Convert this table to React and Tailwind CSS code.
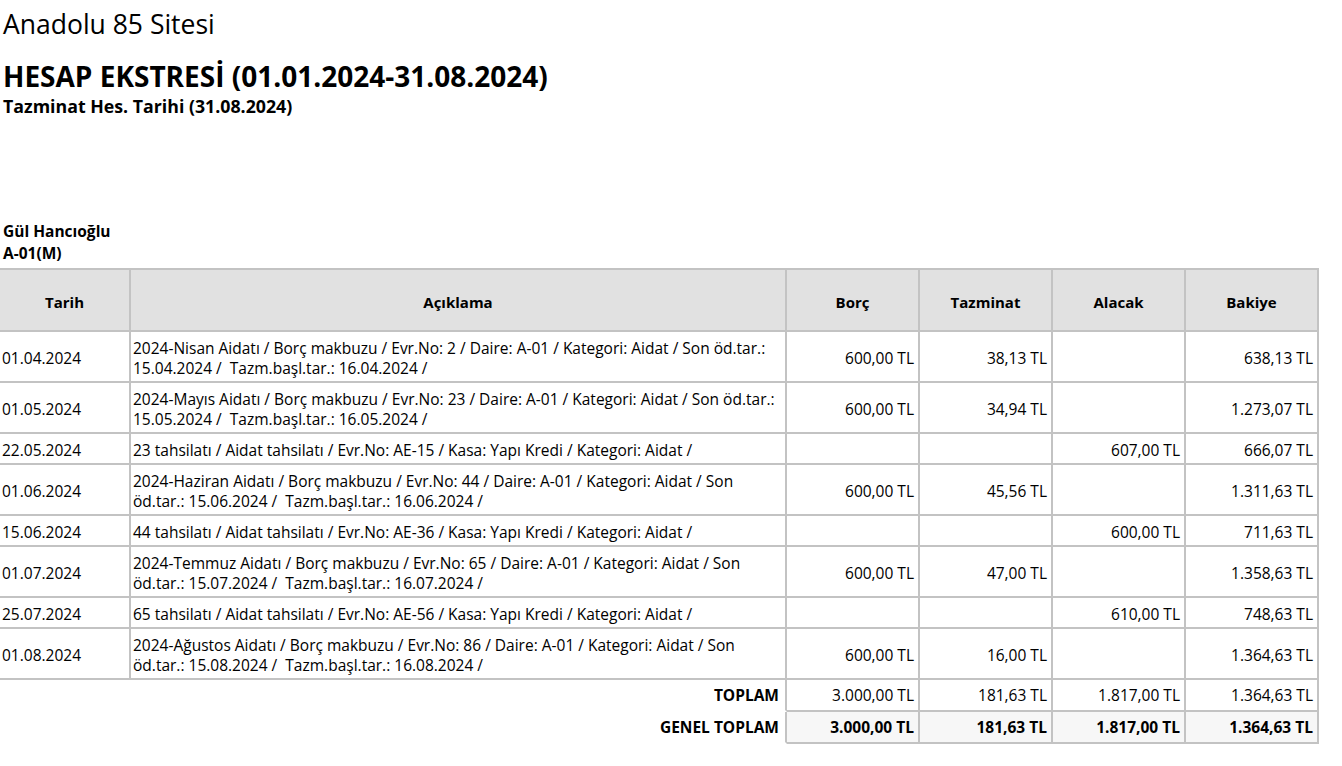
import React from "react";

const rows = [
  ["01.04.2024", "2024-Nisan Aidatı / Borç makbuzu / Evr.No: 2 / Daire: A-01 / Kategori: Aidat / Son öd.tar.: 15.04.2024 /\u00a0 Tazm.başl.tar.: 16.04.2024 /", "600,00 TL", "38,13 TL", "", "638,13 TL"],
  ["01.05.2024", "2024-Mayıs Aidatı / Borç makbuzu / Evr.No: 23 / Daire: A-01 / Kategori: Aidat / Son öd.tar.: 15.05.2024 /\u00a0 Tazm.başl.tar.: 16.05.2024 /", "600,00 TL", "34,94 TL", "", "1.273,07 TL"],
  ["22.05.2024", "23 tahsilatı / Aidat tahsilatı / Evr.No: AE-15 / Kasa: Yapı Kredi / Kategori: Aidat /", "", "", "607,00 TL", "666,07 TL"],
  ["01.06.2024", "2024-Haziran Aidatı / Borç makbuzu / Evr.No: 44 / Daire: A-01 / Kategori: Aidat / Son öd.tar.: 15.06.2024 /\u00a0 Tazm.başl.tar.: 16.06.2024 /", "600,00 TL", "45,56 TL", "", "1.311,63 TL"],
  ["15.06.2024", "44 tahsilatı / Aidat tahsilatı / Evr.No: AE-36 / Kasa: Yapı Kredi / Kategori: Aidat /", "", "", "600,00 TL", "711,63 TL"],
  ["01.07.2024", "2024-Temmuz Aidatı / Borç makbuzu / Evr.No: 65 / Daire: A-01 / Kategori: Aidat / Son öd.tar.: 15.07.2024 /\u00a0 Tazm.başl.tar.: 16.07.2024 /", "600,00 TL", "47,00 TL", "", "1.358,63 TL"],
  ["25.07.2024", "65 tahsilatı / Aidat tahsilatı / Evr.No: AE-56 / Kasa: Yapı Kredi / Kategori: Aidat /", "", "", "610,00 TL", "748,63 TL"],
  ["01.08.2024", "2024-Ağustos Aidatı / Borç makbuzu / Evr.No: 86 / Daire: A-01 / Kategori: Aidat / Son öd.tar.: 15.08.2024 /\u00a0 Tazm.başl.tar.: 16.08.2024 /", "600,00 TL", "16,00 TL", "", "1.364,63 TL"],
];

const totals = ["3.000,00 TL", "181,63 TL", "1.817,00 TL", "1.364,63 TL"];

export default function App() {
  return (
    <div className="font-['Open_Sans',sans-serif] text-black bg-white min-h-[766px]">
      <div className="pl-[3px] pt-[6px] text-[26.5px] leading-[36px]">Anadolu 85 Sitesi</div>
      <div className="pl-[3px] mt-[16px] text-[28px] leading-[36px] font-bold">HESAP EKSTRESİ (01.01.2024-31.08.2024)</div>
      <div className="pl-[3px] mt-[2px] text-[17.75px] leading-[20px] font-bold">Tazminat Hes. Tarihi (31.08.2024)</div>
      <div className="pl-[3px] mt-[104px] text-[15.5px] leading-[22px] font-bold">
        <div>Gül Hancıoğlu</div>
        <div>A-01(M)</div>
      </div>
      <table className="mt-[4px] w-[1319px] table-fixed border-separate border-spacing-0 text-[15.5px] leading-[20px]">
        <colgroup>
          <col className="w-[131px]" />
          <col className="w-[656px]" />
          <col className="w-[133px]" />
          <col className="w-[133px]" />
          <col className="w-[133px]" />
          <col className="w-[133px]" />
        </colgroup>
        <thead>
          <tr className="bg-[#e1e1e1] font-bold">
            {["Tarih", "Açıklama", "Borç", "Tazminat", "Alacak", "Bakiye"].map((h) => (
              <th key={h} className="border-t-2 border-r-2 border-b-2 border-[#c3c3c3] pt-[22px] pb-[18px] text-center font-bold text-[15px]">
                {h}
              </th>
            ))}
          </tr>
        </thead>
        <tbody>
          {rows.map((r, i) => (
            <tr key={i}>
              <td className="border-r-2 border-b-2 border-[#c3c3c3] pl-[2px] pt-[6px] pb-[3px] align-middle">{r[0]}</td>
              <td className="border-r-2 border-b-2 border-[#c3c3c3] pl-[2px] pr-[2px] pt-[6px] pb-[3px] align-middle">{r[1]}</td>
              {r.slice(2).map((v, j) => (
                <td key={j} className="border-r-2 border-b-2 border-[#c3c3c3] pr-[4px] pt-[6px] pb-[3px] text-right align-middle">{v}</td>
              ))}
            </tr>
          ))}
          <tr>
            <td colSpan={2} className="border-r-2 border-b-2 border-b-transparent border-r-[#c3c3c3] pr-[6px] py-[5px] text-right font-bold">TOPLAM</td>
            {totals.map((v, j) => (
              <td key={j} className="border-r-2 border-b-2 border-[#c3c3c3] pr-[4px] py-[5px] text-right">{v}</td>
            ))}
          </tr>
          <tr>
            <td colSpan={2} className="border-r-2 border-b-2 border-b-transparent border-r-[#c3c3c3] pr-[6px] py-[5px] text-right font-bold">GENEL TOPLAM</td>
            {totals.map((v, j) => (
              <td key={j} className="border-r-2 border-b-2 border-[#c3c3c3] bg-[#f7f7f7] pr-[4px] py-[5px] text-right font-bold">{v}</td>
            ))}
          </tr>
        </tbody>
      </table>
    </div>
  );
}
